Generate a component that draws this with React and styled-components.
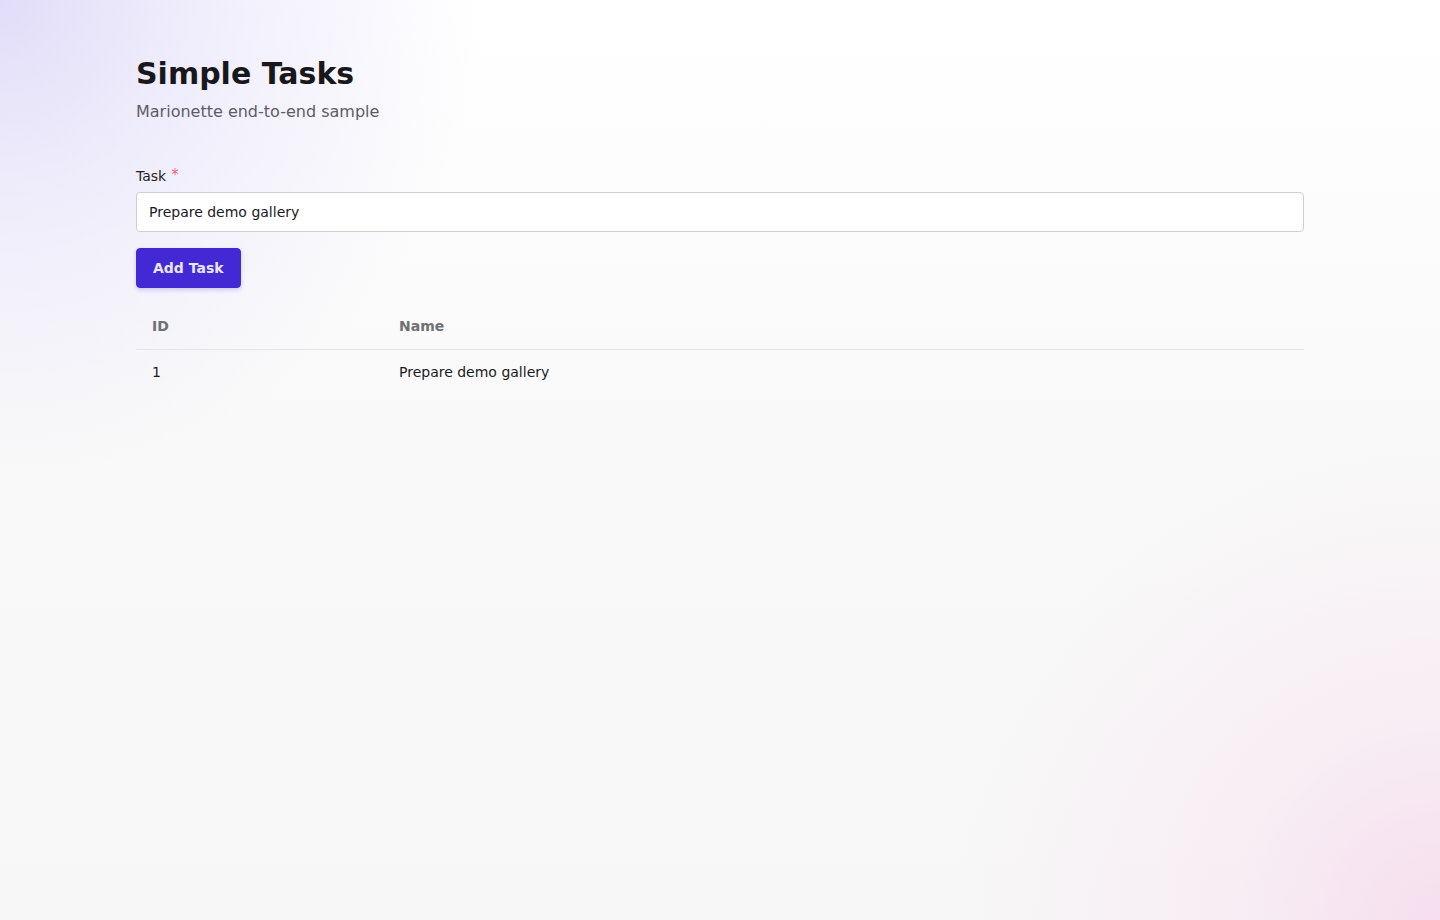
import React, { useState } from "react";
import styled, { createGlobalStyle } from "styled-components";

const GlobalStyle = createGlobalStyle`
  html, body { margin: 0; padding: 0; }
  body {
    font-family: "DejaVu Sans", "Liberation Sans", sans-serif;
    color: #1a1a1f;
    min-height: 920px;
    background:
      radial-gradient(circle at 0% 0%, rgba(224, 219, 248, 0.95) 0px, rgba(230, 226, 250, 0.6) 200px, rgba(240, 238, 252, 0) 480px),
      radial-gradient(circle at 100% 100%, rgba(246, 222, 238, 1) 0px, rgba(247, 230, 241, 0.6) 200px, rgba(248, 240, 245, 0) 480px),
      linear-gradient(180deg, #ffffff 0px, #f9f9f9 420px, #f7f7f7 920px);
    background-attachment: fixed;
  }
  * { box-sizing: border-box; }
`;

const Page = styled.main`
  max-width: 1200px;
  margin: 0 auto;
  padding: 56px 16px 48px;
`;

const Header = styled.header`
  display: flex;
  flex-direction: column;
  gap: 8px;
  margin-bottom: 42px;
`;

const Title = styled.h1`
  margin: 0;
  font-size: 30px;
  line-height: 36px;
  font-weight: 700;
  color: #18181c;
`;

const Subtitle = styled.p`
  margin: 0;
  font-size: 16px;
  line-height: 24px;
  color: #5c5c68;
`;

const Form = styled.form`
  display: flex;
  flex-direction: column;
  align-items: flex-start;
  gap: 16px;
`;

const Field = styled.div`
  display: flex;
  flex-direction: column;
  gap: 6px;
  width: 100%;
`;

const Label = styled.label`
  font-size: 14px;
  line-height: 20px;
  color: #1f1f24;
`;

const Required = styled.span`
  color: #f0648a;
  margin-left: 5px;
  font-size: 15px;
  position: relative;
  top: -1px;
`;

const Input = styled.input`
  width: 100%;
  height: 40px;
  padding: 0 12px;
  border: 1px solid #cfcfd3;
  border-radius: 4px;
  background: #ffffff;
  font-family: inherit;
  font-size: 14px;
  color: #1a1a1f;
  outline: none;
`;

const Button = styled.button`
  height: 40px;
  padding: 0 16px;
  border: 1px solid #4329d4;
  border-radius: 4px;
  background: #4329d4;
  color: #e9e6ff;
  font-family: inherit;
  font-size: 14px;
  font-weight: 700;
  cursor: pointer;
  box-shadow: 0 2px 4px rgba(67, 41, 212, 0.22);
`;

const Table = styled.table`
  width: 100%;
  margin-top: 17px;
  border-collapse: collapse;
  table-layout: fixed;
`;

const HeadCell = styled.th`
  text-align: left;
  padding: 11px 16px 13px;
  font-size: 14px;
  line-height: 20px;
  font-weight: 700;
  color: #707074;
  border-bottom: 1px solid #e6e6e8;
  width: ${(p) => p.$width || "auto"};
`;

const Cell = styled.td`
  padding: 12px 16px;
  font-size: 14px;
  line-height: 20px;
  color: #1a1a1f;
`;

export default function App() {
  const [value, setValue] = useState("Prepare demo gallery");
  const [tasks, setTasks] = useState([{ id: 1, name: "Prepare demo gallery" }]);

  const onSubmit = (e) => {
    e.preventDefault();
    if (!value.trim()) return;
    setTasks((t) => [...t, { id: t.length + 1, name: value }]);
  };

  return (
    <>
      <GlobalStyle />
      <Page>
        <Header>
          <Title>Simple Tasks</Title>
          <Subtitle>Marionette end-to-end sample</Subtitle>
        </Header>
        <Form onSubmit={onSubmit}>
          <Field>
            <Label htmlFor="task">
              Task<Required>*</Required>
            </Label>
            <Input id="task" value={value} onChange={(e) => setValue(e.target.value)} />
          </Field>
          <Button type="submit">Add Task</Button>
        </Form>
        <Table>
          <thead>
            <tr>
              <HeadCell $width="247px">ID</HeadCell>
              <HeadCell>Name</HeadCell>
            </tr>
          </thead>
          <tbody>
            {tasks.map((t) => (
              <tr key={t.id}>
                <Cell>{t.id}</Cell>
                <Cell>{t.name}</Cell>
              </tr>
            ))}
          </tbody>
        </Table>
      </Page>
    </>
  );
}
